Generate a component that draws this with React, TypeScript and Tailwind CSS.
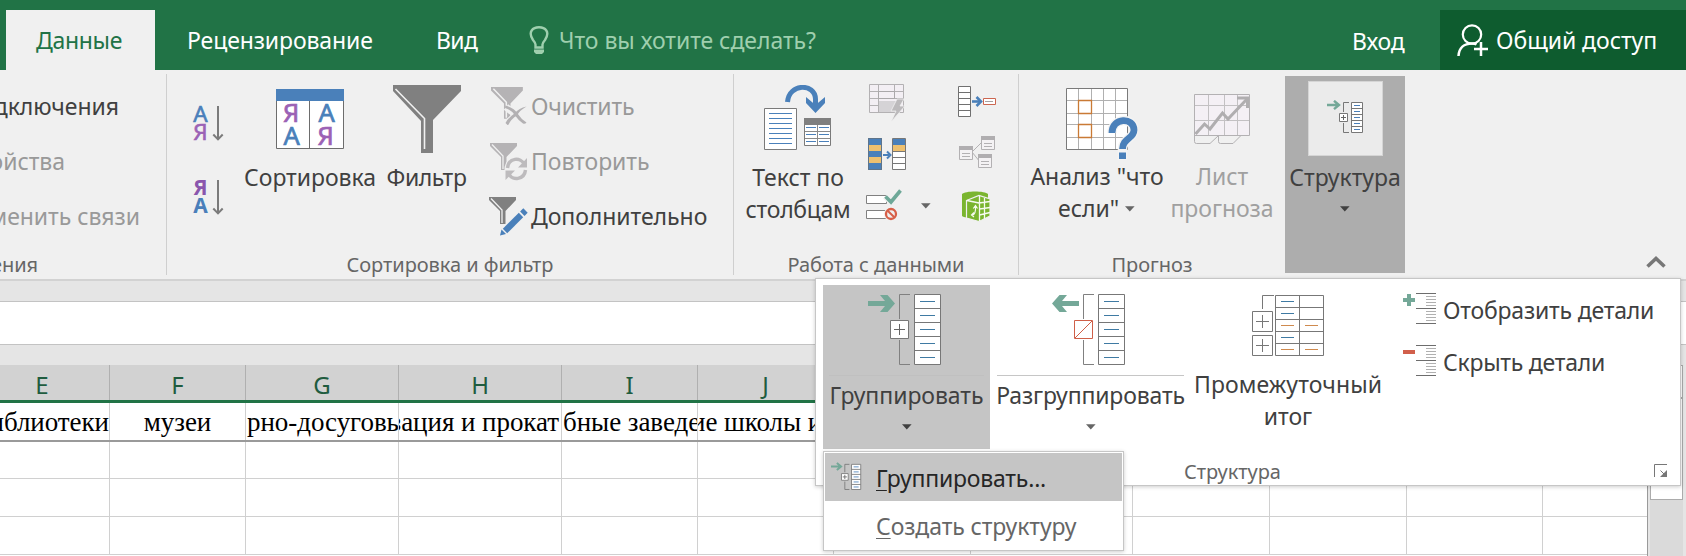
import type { ReactNode } from "react";

type IconProps = { x: number; y: number; w: number; h: number; className?: string; children: ReactNode };

function Icon({ x, y, w, h, className = "", children }: IconProps) {
  return (
    <svg width={w} height={h} viewBox={`${x} ${y} ${w} ${h}`} fill="none" className={`block shrink-0 ${className}`}>
      {children}
    </svg>
  );
}

const range = (n: number) => Array.from({ length: n }, (_, i) => i);

function Caret({ className = "" }: { className?: string }) {
  return (
    <svg width="10" height="6" viewBox="0 0 10 6" className={`block shrink-0 ${className}`}>
      <path d="M0 .3H9.6L4.8 5.6Z" fill="currentColor" />
    </svg>
  );
}

function SortLetters({ desc = false }: { desc?: boolean }) {
  return (
    <Icon x={0} y={0} w={34} h={40}>
      <g fontFamily="Noto Sans, sans-serif" fontSize={desc ? 21 : 22.5} fontWeight={desc ? 700 : 400} strokeWidth={desc ? 0 : 0.6} textAnchor="middle">
        <text x="8.5" y={desc ? 18 : 19} fill={desc ? "#8a56ad" : "#4a7fba"} stroke="#4a7fba">{desc ? "Я" : "А"}</text>
        <text x="8.5" y={desc ? 36 : 37} fill={desc ? "#4a7fba" : "#9b62b5"} stroke="#9b62b5">{desc ? "А" : "Я"}</text>
      </g>
      <path d="M26 3V36M21.3 31.5L26 36.4L30.7 31.5" stroke="#7b7b7b" strokeWidth="2" />
    </Icon>
  );
}

function SortIcon() {
  return (
    <Icon x={276} y={89} w={68} h={60}>
      <path d="M276.5 90H343.5V148.5H276.5Z" fill="#fff" stroke="#6d6d6d" />
      <path d="M309.5 100V148" stroke="#6d6d6d" />
      <path d="M276 89H344V101H276Z" fill="#4a80ba" />
      <g fontFamily="Noto Sans, sans-serif" fontSize="25.500" strokeWidth=".7" textAnchor="middle">
        <text x="291" y="122" fill="#9b62b5" stroke="#9b62b5">Я</text>
        <text x="326.5" y="122" fill="#4a80ba" stroke="#4a80ba">А</text>
        <text x="291.5" y="145" fill="#4a80ba" stroke="#4a80ba">А</text>
        <text x="325.5" y="145" fill="#9b62b5" stroke="#9b62b5">Я</text>
      </g>
    </Icon>
  );
}

function FilterIcon() {
  return (
    <Icon x={393} y={85} w={68} h={68}>
      <path d="M393 85H461V91L433 120V153H421V121L393 91Z" fill="#808080" />
      <path d="M395.5 89L424.5 118.5V149" stroke="#f0f0f0" strokeWidth="1.6" />
    </Icon>
  );
}

function SmallFunnel({ color }: { color: string }) {
  return (
    <>
      <path d="M0 0H27V3L16.5 14V27H11V14L0 3Z" fill={color} />
      <path d="M2 1.5L13 13V26" stroke="#f0f0f0" strokeWidth="1.3" />
    </>
  );
}

function ClearIcon() {
  return (
    <Icon x={-1} y={0} w={37} h={38}>
      <g transform="scale(1.18)"><SmallFunnel color="#b5b3b5" /></g>
      <path d="M15 20L35 36M35 20L16 36" stroke="#f0f0f0" strokeWidth="7" />
      <path d="M14.500 18.500Q23 21 26.500 26.500Q30 32 35.500 35.500Q34 37.500 32 36.500Q27 33 24.500 29Q20 22.500 14 21Z" fill="#b3b1b3" />
      <path d="M35.500 19.500Q28 21 23.500 26.500Q17 31 14.500 36L17 38.500Q20 32 26 28.500Q29 23 35.500 19.500Z" fill="#b3b1b3" />
    </Icon>
  );
}

function ReapplyIcon() {
  return (
    <Icon x={0} y={0} w={38} h={38}>
      <SmallFunnel color="#b5b3b5" />
      <circle cx="26.5" cy="26" r="12" fill="#f0f0f0" />
      <path d="M17.5 25C18.5 14.500 31 14 34 21M35.500 27C34.500 37 22 38 19 31" stroke="#bdbbbd" strokeWidth="3.400" />
      <path d="M37 15V24.500H28ZM15.500 37V27.500H25Z" fill="#bdbbbd" />
    </Icon>
  );
}

function AdvancedIcon() {
  return (
    <Icon x={0} y={0} w={39} h={39}>
      <SmallFunnel color="#808080" />
      <path d="M12 38L37 13" stroke="#f0f0f0" strokeWidth="9" />
      <path d="M16 34L32 18" stroke="#4a80ba" strokeWidth="6.200" />
      <path d="M33.300 16.700L36.500 13.500" stroke="#4a80ba" strokeWidth="6.200" />
      <path d="M12.500 32.500L17 37L11 38.500Z" fill="#4a80ba" />
    </Icon>
  );
}

function TextToColumnsIcon() {
  return (
    <Icon x={764} y={85} w={68} h={66}>
      <path d="M764.500 108.500H796.500V149.500H764.500Z" fill="#fff" stroke="#7a7a7a" />
      {range(7).map((i) => <path key={i} d={`M769 ${113.500 + i * 5}H792`} stroke="#4a80ba" />)}
      <path d="M804.500 119H830.500V145.500H804.500Z" fill="#fff" stroke="#7a7a7a" />
      <path d="M804 118H831V125H804Z" fill="#7f7f7f" />
      <path d="M805 131.500H830M805 138.500H830M817.500 125V145" stroke="#8a8a8a" />
      <path d="M806 127.500H816M819 127.500H829M806 134.500H816M819 134.500H829M806 141.500H816M819 141.500H829" stroke="#4a80ba" />
      <path d="M787.500 102C789 83 815 83 815.500 99V106" stroke="#4a80ba" strokeWidth="5" />
      <path d="M806 97L815.500 105L825 97V103L815.500 113L806 103Z" fill="#4a80ba" />
    </Icon>
  );
}

function FlashFillIcon() {
  return (
    <Icon x={868} y={83} w={38} h={40}>
      <path d="M869.500 84.500H903.500V112.500H869.500Z" fill="#f3eff4" stroke="#b3b1b3" />
      <path d="M870 91.500H903M870 98.500H903M870 105.500H878M878.500 85V112M894.500 85V92" stroke="#b3b1b3" />
      <path d="M878.500 91.500H894.500V98.500H878.500Z" stroke="#aaa8aa" />
      <path d="M879 101H896V112H879Z" fill="#d5d3d6" />
      <path d="M897 99H904L900 106H905L891 122L896 111H891Z" fill="#bcbabc" stroke="#f0f0f0" strokeWidth=".8" />
    </Icon>
  );
}

function RemoveDuplicatesIcon() {
  return (
    <Icon x={868} y={138} w={38} h={32}>
      <path d="M868 138H882V170H868Z" fill="#4a80ba" />
      <path d="M868 145H882V151H868ZM868 157H882V163H868Z" fill="#eec06f" />
      <path d="M868.500 138.500H881.500V169.500H868.500Z" stroke="#5f7489" />
      <path d="M892.500 138.500H905.500V169.500H892.500Z" fill="#fff" stroke="#777" />
      <path d="M893 139H905V145H893Z" fill="#4a80ba" />
      <path d="M893 145H905V151H893Z" fill="#eec06f" />
      <path d="M892 151.500H906M892 157.500H906M892 163.500H906" stroke="#777" />
      <path d="M883 155H889M887 151.500L890.500 155L887 158.500" stroke="#4a80ba" strokeWidth="2" />
    </Icon>
  );
}

function ValidationIcon() {
  return (
    <Icon x={866} y={188} w={36} h={34}>
      <path d="M866.500 195.500H886.500V203.500H866.500ZM866.500 210.500H886.500V218.500H866.500Z" fill="#fff" stroke="#808080" />
      <path d="M885.500 196L891.500 202L900.500 190.500" stroke="#f0f0f0" strokeWidth="7" />
      <path d="M885.500 196.500L891 202L900.500 190.500" stroke="#6ea898" strokeWidth="3.600" />
      <circle cx="891" cy="214" r="7" fill="#f0f0f0" />
      <circle cx="891" cy="214" r="5" stroke="#d75f48" strokeWidth="2.300" />
      <path d="M887.700 210.700L894.300 217.300" stroke="#d75f48" strokeWidth="2" />
    </Icon>
  );
}

function ConsolidateIcon() {
  return (
    <Icon x={958} y={86} w={38} h={32}>
      <path d="M958.500 86.500H970.500V116.500H958.500ZM958.500 92.500H970.500M958.500 98.500H970.500M958.500 104.500H970.500M958.500 110.500H970.500" fill="#fff" stroke="#707070" />
      <path d="M972 101.500H980" stroke="#4a80ba" strokeWidth="2.600" />
      <path d="M976.500 97L981 101.500L976.500 106" stroke="#4a80ba" strokeWidth="2.600" />
      <path d="M983.500 98.500H995.500V104.500H983.500Z" fill="#fff" stroke="#cc6650" />
      <path d="M985 101.500H993" stroke="#a7a0a0" />
    </Icon>
  );
}

function RelationsIcon() {
  return (
    <Icon x={958} y={136} w={38} h={32}>
      <path d="M972 152L982 142M972 152L980 162" stroke="#b3b1b3" />
      {[[959, 146], [981, 136], [978, 154]].map(([x, y]) => (
        <g key={x} transform={`translate(${x} ${y})`}>
          <path d="M.5 .5H13.500V13.500H.5Z" fill="#f4f2f4" stroke="#b3b1b3" />
          <path d="M0 0H14V4H0Z" fill="#b0aeb0" />
          <path d="M3 7.500H11M3 10.500H11" stroke="#b3b1b3" />
        </g>
      ))}
    </Icon>
  );
}

function DataModelIcon() {
  return (
    <Icon x={958} y={190} w={38} h={32}>
      <path d="M962 194C965 190.500 985 190.500 988 194V216C985 219 965 219 962 216Z" fill="#7ab52f" />
      <path d="M966.500 200.500L979 195.500L990 199V216L979 221.500L966.500 218Z" fill="#7ab52f" stroke="#f0f0f0" strokeWidth="1.200" />
      <path d="M979.500 196V221M967 200.500L979 203L990 201.500M979.500 209L990 207.500M979.500 215L990 212.500M984.500 198V219" stroke="#f6fbef" strokeWidth="1.300" />
      <path d="M972 215Q976 215 975.500 206M973.300 208.500L975.500 205.500L977.500 208.500M974 212.500L971.500 215L974 217" stroke="#f6fbef" strokeWidth="1.200" />
    </Icon>
  );
}

function WhatIfIcon() {
  return (
    <Icon x={1066} y={88} w={72} h={74}>
      <path d="M1066.500 88.500H1127.500V149.500H1066.500Z" fill="#fff" stroke="#7a7a7a" />
      <path d="M1078.500 89V149M1091.500 89V149M1103.500 89V149M1115.500 89V149M1067 100.500H1127M1067 113.500H1127M1067 124.500H1127M1067 137.500H1127" stroke="#b0b0b0" />
      <path d="M1078.500 100.500H1091.500V113.500H1078.500ZM1078.500 124.500H1091.500V137.500H1078.500Z" fill="#fff" stroke="#c97a35" strokeWidth="1.300" />
      <path d="M1112 133C1112 117 1134 117 1134 130C1134 139 1122.500 138 1122.500 149V160" stroke="#f4f4f4" strokeWidth="9.500" />
      <path d="M1112 133C1112 117 1134 117 1134 130C1134 139 1122.500 138 1122.500 149" stroke="#4a80ba" strokeWidth="6.800" />
      <path d="M1119 152.500H1126V159H1119Z" fill="#4a80ba" />
    </Icon>
  );
}

function ForecastIcon() {
  return (
    <Icon x={1193} y={93} w={57} h={52}>
      <path d="M1193.500 94.500H1248.500V135.500H1193.500Z" fill="#f4f0f5" stroke="#b3b1b3" />
      <path d="M1207.500 95V135M1223.500 95V135M1236.500 95V135M1194 105.500H1248M1194 120.500H1248" stroke="#c3c1c3" />
      <path d="M1193.500 135V141.500Q1193.500 143.500 1195.500 143.500H1209L1217.500 135.500V141.500Q1217.500 143.500 1219.500 143.500H1232L1240 135.500" stroke="#b3b1b3" />
      <path d="M1194.500 134L1203.500 124L1209 129L1221.500 113L1227 119L1246 99" stroke="#b0aeb0" strokeWidth="3" />
      <path d="M1236 98H1246.500V108" stroke="#b0aeb0" strokeWidth="3" />
    </Icon>
  );
}

function GroupIconSmall({ width, height }: { width: number; height: number }) {
  return (
    <svg width={width} height={height} viewBox="1327 101 37 34" fill="none" className="block shrink-0">
      <path d="M1327 106H1339M1334 101.800L1339 106L1334 110.200" stroke="#74a898" strokeWidth="2.400" />
      <path d="M1349 103.500H1343.500V113M1343.500 124V133.500H1349" stroke="#777" />
      <path d="M1339.500 114.500H1347.500V122.500H1339.500Z" fill="#fff" stroke="#777" />
      <path d="M1341 118.500H1346M1343.500 116V121" stroke="#666" />
      <path d="M1351.500 103.500H1362.500V133.500H1351.500ZM1351.500 109.500H1362.500M1351.500 115.500H1362.500M1351.500 121.500H1362.500M1351.500 127.500H1362.500" fill="#fff" stroke="#777" />
      <path d="M1354 106.500H1360M1354 112.500H1360M1354 118.500H1360M1354 124.500H1360M1354 130.500H1360" stroke="#4a80ba" />
    </svg>
  );
}

function GroupIconLarge({ ungroup = false }: { ungroup?: boolean }) {
  return (
    <Icon x={868} y={294} w={77} h={72}>
      <path
        d="M868 301H885L880 295H887.500L895 303.500L887.500 312H880L885 306H868Z"
        fill="#74a898"
        transform={ungroup ? "translate(1763 0) scale(-1 1)" : undefined}
      />
      <path d="M910 294.500H899.500V319M899.500 340V364.500H910" stroke="#808080" />
      <path d="M890.500 320.500H908.500V338.500H890.500Z" fill="#fff" stroke={ungroup ? "#cf5f48" : "#777"} />
      <path d={ungroup ? "M891 338L908 321" : "M894 329.500H905M899.500 324V335"} stroke={ungroup ? "#cf5f48" : "#666"} />
      <path d="M914.500 294.500H940.500V364.500H914.500ZM914.500 308.500H940.500M914.500 322.500H940.500M914.500 336.500H940.500M914.500 350.500H940.500" fill="#fff" stroke="#777" />
      {range(5).map((i) => <path key={i} d={`M920 ${301.500 + i * 14}H935`} stroke="#3f7aa3" />)}
    </Icon>
  );
}

function SubtotalIcon() {
  return (
    <Icon x={1252} y={295} w={72} h={61}>
      <path d="M1262.500 309V295.500H1274" stroke="#777" />
      <path d="M1252.500 311.500H1272.500V331.500H1252.500ZM1252.500 335.500H1272.500V355.500H1252.500Z" fill="#fff" stroke="#777" />
      <path d="M1256 321.500H1269M1262.500 315V328M1256 345.500H1269M1262.500 339V352" stroke="#777" />
      <path d="M1275.500 295.500H1323.500V355.500H1275.500ZM1299.500 295.500V355.500M1275.500 307.500H1323.500M1275.500 319.500H1323.500M1275.500 331.500H1323.500M1275.500 343.500H1323.500" fill="#fff" stroke="#777" />
      <path d="M1281 301.500H1294M1281 313.500H1294M1281 337.500H1294" stroke="#3f7aa3" />
      <path d="M1281 325.500H1294M1305 325.500H1318M1281 349.500H1294M1305 349.500H1318" stroke="#cf8a4e" />
    </Icon>
  );
}

function DetailIcon({ show = false }: { show?: boolean }) {
  return (
    <Icon x={0} y={0} w={34} h={32}>
      {show && <path d="M6 1V13" stroke="#74a898" strokeWidth="4" />}
      <path d="M0 7H12" stroke={show ? "#74a898" : "#d15f4b"} strokeWidth="4" />
      <path d="M13 .5H33M13 15.500H33M13 30.500H33" stroke="#6d6d6d" />
      {[3, 6, 9, 12, 18, 21, 24, 27].map((y) => <path key={y} d={`M23 ${y + 0.5}H33`} stroke="#b0b0b0" />)}
    </Icon>
  );
}

function Divider() {
  return <div className="mt-1 h-[201px] w-px shrink-0 bg-[#cfcfcf]" />;
}

function GroupLabel({ children, className = "" }: { children: ReactNode; className?: string }) {
  return <div className={`h-6 pt-px text-center text-[20px] leading-6 text-[#666] ${className}`}>{children}</div>;
}

function TabBar() {
  return (
    <header className="flex h-[70px] shrink-0 items-end bg-[#217346] text-white">
      <div className="ml-[6px] h-[60px] w-[149px] bg-[#f0f0f0] pt-4 pr-[3px] text-center tracking-[-0.3px] text-[#217346]">Данные</div>
      <div className="ml-[32px] h-[60px] w-[186px] pt-4 tracking-[-0.1px]">Рецензирование</div>
      <div className="ml-[63px] h-[60px] w-[44px] pt-4 tracking-[-0.6px]">Вид</div>
      <div className="ml-[49px] flex h-[60px] items-start text-[#9fcfae]">
        <Icon x={0} y={0} w={20} h={29} className="mt-[16px]">
          <path d="M6.500 21.500V18.500Q6.500 17 4 14C-1.500 5.500 4 1.300 10 1.300S21.500 5.500 16 14Q13.500 17 13.500 18.500V21.500Z" stroke="currentColor" strokeWidth="2.400" />
          <path d="M5 23.500H15V26L13 28H7L5 26Z" fill="currentColor" />
        </Icon>
        <span className="ml-[10px] pt-4">Что вы хотите сделать?</span>
      </div>
      <div className="ml-auto h-[60px] w-[88px] pt-[17px] tracking-[-0.2px]">Вход</div>
      <div className="flex h-[60px] w-[246px] items-start bg-[#0e5c2f]">
        <Icon x={0} y={0} w={32} h={33} className="ml-[17px] mt-[14px]">
          <circle cx="15" cy="10.500" r="9.200" stroke="#fff" strokeWidth="2.200" />
          <path d="M1.500 32C2 24 7 19.500 15 19.500Q18 19.500 19.500 20.500M24 18V32M17 25H31" stroke="#fff" strokeWidth="2.500" />
        </Icon>
        <span className="ml-[7px] pt-4">Общий доступ</span>
      </div>
    </header>
  );
}

function Ribbon() {
  return (
    <div className="flex h-[211px] shrink-0 border-b-2 border-[#d2d2d2] bg-[#f0f0f0] text-[#404040]">
      <section className="flex w-[166px] shrink-0 flex-col overflow-hidden pt-[22px]">
        <div className="flex w-[119px] justify-end">Подключения</div>
        <div className="mt-[27px] flex w-[65px] justify-end text-[#999]">Свойства</div>
        <div className="mt-[27px] flex w-[140px] justify-end text-[#999]">Изменить связи</div>
        <GroupLabel className="mt-[22px] flex w-[38px] justify-end">Подключения</GroupLabel>
      </section>
      <Divider />
      <section className="flex w-[566px] shrink-0 flex-col">
        <div className="flex h-[182px]">
          <div className="ml-[25px] flex w-[51px] flex-col gap-[34px] pt-[33px]">
            <SortLetters />
            <SortLetters desc />
          </div>
          <div className="flex w-[134px] flex-col items-center pt-[19px]">
            <SortIcon />
            <span className="mt-[14px]">Сортировка</span>
          </div>
          <div className="flex w-[99px] flex-col items-center pt-[15px]">
            <FilterIcon />
            <span className="mt-[10px] tracking-[-0.4px]">Фильтр</span>
          </div>
          <div className="ml-[13px] flex flex-col text-[#999]">
            <div className="flex h-[55px] items-start pt-[17px]">
              <div className="w-[42px] pl-px"><ClearIcon /></div>
              <span className="mt-[5px] tracking-[-0.2px]">Очистить</span>
            </div>
            <div className="flex h-[55px] items-start pt-[18px]">
              <div className="w-[42px] pl-px"><ReapplyIcon /></div>
              <span className="mt-[4px]">Повторить</span>
            </div>
            <div className="flex h-[55px] items-start pt-[17px] text-[#404040]">
              <div className="w-[42px]"><AdvancedIcon /></div>
              <span className="mt-[5px]">Дополнительно</span>
            </div>
          </div>
        </div>
        <GroupLabel>Сортировка и фильтр</GroupLabel>
      </section>
      <Divider />
      <section className="flex w-[284px] shrink-0 flex-col">
        <div className="flex h-[182px]">
          <div className="ml-[9px] flex w-[110px] flex-col items-center pt-[15px] text-center">
            <TextToColumnsIcon />
            <span className="mt-[10px] leading-[32px]">Текст по<br /><span className="tracking-[-0.3px]">столбцам</span></span>
          </div>
          <div className="ml-[13px] flex w-[64px] flex-col pt-[13px]">
            <div className="pl-[2px]"><FlashFillIcon /></div>
            <div className="mt-[15px] pl-[2px]"><RemoveDuplicatesIcon /></div>
            <div className="mt-[18px] flex">
              <ValidationIcon />
              <Caret className="ml-[19px] mt-[15px] text-[#666]" />
            </div>
          </div>
          <div className="ml-[28px] flex w-[40px] flex-col items-start pt-4">
            <ConsolidateIcon />
            <div className="mt-[18px]"><RelationsIcon /></div>
            <div className="mt-[22px]"><DataModelIcon /></div>
          </div>
        </div>
        <GroupLabel>Работа с данными</GroupLabel>
      </section>
      <Divider />
      <section className="flex w-[266px] shrink-0 flex-col">
        <div className="flex h-[182px]">
          <div className="ml-[8px] flex w-[140px] flex-col items-center pt-[18px] text-center">
            <div className="pl-[10px]"><WhatIfIcon /></div>
            <span className="mt-[-2px] leading-[32px]">Анализ "что</span>
            <span className="flex items-start gap-[6px] pr-px leading-[32px]">если" <Caret className="mt-[14px] text-[#666]" /></span>
          </div>
          <div className="flex w-[110px] flex-col items-center pt-[23px] text-center text-[#a0a0a0]">
            <ForecastIcon />
            <span className="mt-[15px] leading-[32px]">Лист<br />прогноза</span>
          </div>
        </div>
        <GroupLabel>Прогноз</GroupLabel>
      </section>
      <button className="mt-[6px] flex h-[197px] w-[120px] shrink-0 flex-col items-center bg-[#adadad] pt-[5px]">
        <div className="flex h-[75px] w-[75px] items-center justify-center border border-[#d5d5d5] bg-[#ebebeb] pb-[3px]">
          <GroupIconSmall width={37} height={34} />
        </div>
        <span className="mt-[7px]">Структура</span>
        <Caret className="mt-[15px]" />
      </button>
      <div className="ml-auto flex items-end pr-[20px] pb-[11px]">
        <Icon x={0} y={0} w={20} h={12}>
          <path d="M1.500 10.500L10 2.500L18.500 10.500" stroke="#777" strokeWidth="3.600" />
        </Icon>
      </div>
    </div>
  );
}

const columns = [
  { name: "E", width: "w-[110px] pr-[25px]", text: "библиотеки", align: "justify-end" },
  { name: "F", width: "w-[136px]", text: "музеи", align: "justify-center" },
  { name: "G", width: "w-[153px]", text: "рно-досуговые", align: "justify-start pl-[1px]" },
  { name: "H", width: "w-[163px]", text: "зация и прокат", align: "justify-end pr-[2px]" },
  { name: "I", width: "w-[136px]", text: "бные заведения", align: "justify-start pl-[1px]" },
  { name: "J", width: "w-[136px]", text: "ие школы и", align: "justify-start -indent-[7px]" },
];
const cellWidths = ["w-[110px]", "w-[136px]", "w-[153px]", "w-[163px]", "w-[136px]", "w-[136px]", "w-[137px]", "w-[162px]", "w-[137px]", "w-[137px]", "w-[136px]", "w-[105px]"];
const rowHeights = ["h-[37px]", "h-[38px]", "h-[38px]"];

function Sheet() {
  return (
    <div className="flex flex-1 flex-col bg-[#e5e5e5]">
      <div className="mt-5 h-[44px] shrink-0 border-y border-[#c3c3c3] bg-white" />
      <div className="mt-5 flex h-[191px] shrink-0">
        <div className="w-[1648px] shrink-0 overflow-hidden border-r border-[#9a9a9a] bg-white">
          <div className="flex h-[38px] border-b-[3px] border-[#217346] bg-[#d2d2d2]">
            {columns.map((c) => (
              <div key={c.name} className={`h-[35px] shrink-0 border-r border-[#b0b0b0] pt-[5px] text-center text-[24px] leading-[30px] text-[#1f5c3f] ${c.width}`}>{c.name}</div>
            ))}
          </div>
          <div className="flex h-[39px] border-b-2 border-[#9a9a9a] font-['Liberation_Serif',serif] text-[27px] leading-[38px] text-black">
            {columns.map((c, i) => (
              <div key={c.name} className={`flex shrink-0 overflow-hidden border-r border-[#d0d0d0] whitespace-nowrap ${cellWidths[i]} ${c.align}`}><span>{c.text}</span></div>
            ))}
          </div>
          {rowHeights.map((height, r) => (
            <div key={r} className={`flex border-b border-[#d0d0d0] ${height}`}>
              {cellWidths.map((w, i) => (
                <div key={i} className={`shrink-0 border-r border-[#d0d0d0] ${w} last:border-r-0`} />
              ))}
            </div>
          ))}
        </div>
        <div className="ml-[2px] flex w-[33px] flex-col bg-[#dadada]">
          <div className="h-[33px] shrink-0 border border-[#ababab] bg-white" />
          <div className="h-[102px] shrink-0 border border-[#ababab] bg-white" />
        </div>
      </div>
    </div>
  );
}

function StructurePanel() {
  return (
    <div className="absolute top-[278px] left-[815px] flex h-[208px] w-[866px] flex-col border border-[#c6c6c6] bg-white text-[#404040] shadow-[0_1px_4px_rgba(0,0,0,0.2)]">
      <div className="flex pt-[6px] pl-[7px]">
        <button className="flex h-[164px] w-[167px] flex-col items-center bg-[#c5c5c5] pt-[9px]">
          <GroupIconLarge />
          <div className="mt-[9px] h-px w-[155px] bg-[#c0c0c0]" />
          <span className="mt-[5px]">Группировать</span>
          <Caret className="mt-[15px]" />
        </button>
        <button className="ml-[7px] flex h-[164px] w-[187px] flex-col items-center pt-[9px]">
          <GroupIconLarge ungroup />
          <div className="mt-[9px] h-px w-full bg-[#c6c6c6]" />
          <span className="mt-[5px] tracking-[-0.15px]">Разгруппировать</span>
          <Caret className="mt-[15px] text-[#666]" />
        </button>
        <button className="ml-[9px] flex h-[164px] w-[190px] flex-col items-center pt-[10px] text-center">
          <SubtotalIcon />
          <span className="mt-[12px] leading-[32px]"><span className="tracking-[0.1px]">Промежуточный</span><br />итог</span>
        </button>
        <div className="ml-[20px] flex flex-col pt-[8px]">
          <div className="flex items-start"><DetailIcon show /><span className="mt-[3px] ml-[6px] tracking-[-0.2px]">Отобразить детали</span></div>
          <div className="mt-[20px] flex items-start"><DetailIcon /><span className="mt-[3px] ml-[6px] tracking-[-0.25px]">Скрыть детали</span></div>
        </div>
      </div>
      <div className="mt-[10px] flex">
        <GroupLabel className="w-[833px]">Структура</GroupLabel>
        <Icon x={0} y={0} w={14} h={14} className="ml-[5px] mt-[5px]">
          <path d="M.5 13V.5H13" stroke="#777" />
          <path d="M6.500 6.500L11 11" stroke="#777" />
          <path d="M13 6V13H6Z" fill="#777" />
        </Icon>
      </div>
    </div>
  );
}

function GroupMenu() {
  return (
    <div className="absolute top-[451px] left-[823px] flex h-[100px] w-[301px] flex-col border border-[#c6c6c6] bg-white p-px shadow-[0_1px_4px_rgba(0,0,0,0.2)]">
      <div className="flex h-[48px] items-start bg-[#c5c5c5] text-[#262626]">
        <div className="w-[51px] pt-[9px] pl-[6px]"><GroupIconSmall width={31} height={29} /></div>
        <span className="pt-[11px] tracking-[-0.2px]"><u className="decoration-1 underline-offset-[3px]">Г</u>руппировать...</span>
      </div>
      <div className="flex h-[48px] items-start pl-[51px] text-[#666]">
        <span className="pt-[11px] tracking-[-0.1px]"><u className="decoration-1 underline-offset-[3px]">С</u>оздать структуру</span>
      </div>
    </div>
  );
}

export default function App() {
  return (
    <div className="relative flex h-[556px] w-[1686px] flex-col overflow-hidden bg-[#e5e5e5] font-['Noto_Sans',sans-serif] text-[23px] leading-[28px] tracking-[-0.05px] whitespace-nowrap">
      <TabBar />
      <Ribbon />
      <Sheet />
      <StructurePanel />
      <GroupMenu />
    </div>
  );
}
